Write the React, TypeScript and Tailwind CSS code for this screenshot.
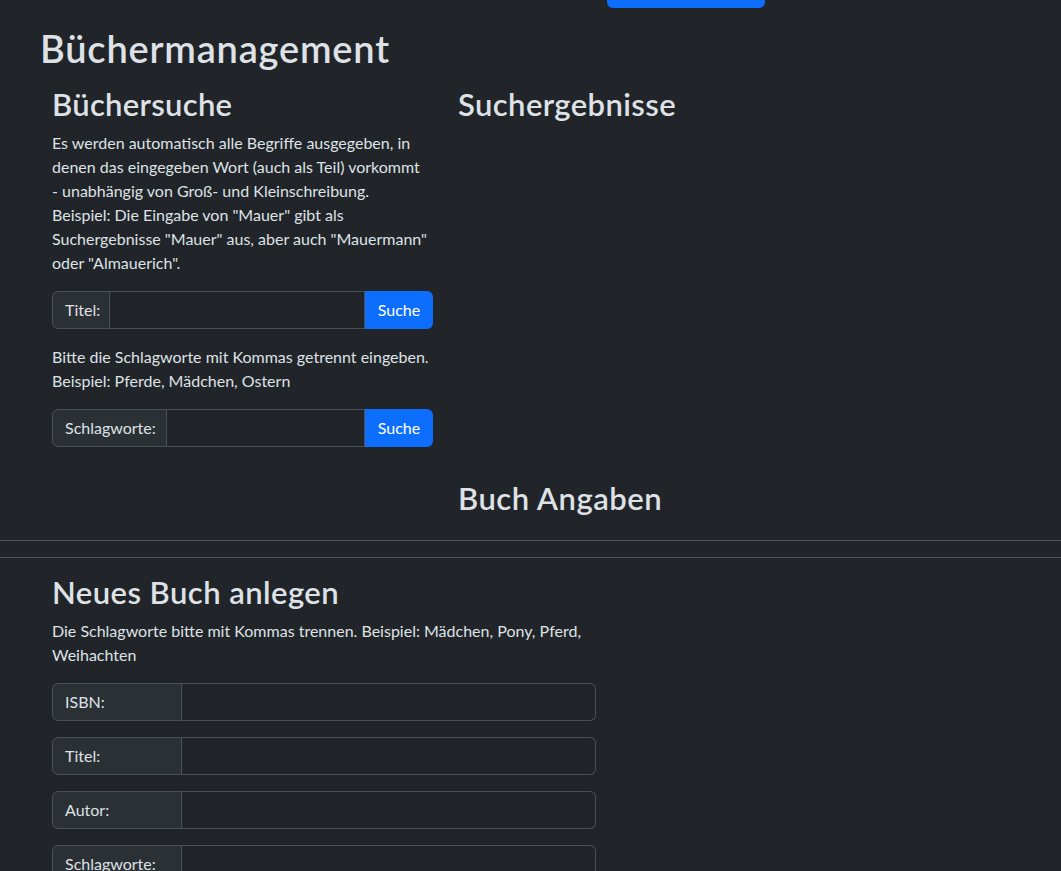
import React from "react";

const font = { fontFamily: "Lato, 'Noto Sans', sans-serif" };

function SearchGroup({ label, labelW }: { label: string; labelW: string }) {
  return (
    <div className="flex h-[38px] w-[381px]">
      <div
        className={`${labelW} flex items-center px-3 bg-[#2b3035] border border-[#495057] rounded-l-md text-[16px] whitespace-nowrap`}
      >
        {label}
      </div>
      <input
        className="flex-1 min-w-0 bg-[#212529] border-y border-r border-[#495057] outline-none px-3 text-[#dee2e6]"
        type="text"
      />
      <button className="w-[68px] bg-[#0d6efd] text-white rounded-r-md text-[16px]">Suche</button>
    </div>
  );
}

function FormGroup({ label }: { label: string }) {
  return (
    <div className="flex h-[38px] w-[544px]">
      <div className="w-[130px] flex items-center px-3 bg-[#2b3035] border border-[#495057] rounded-l-md text-[16px] whitespace-nowrap">
        {label}
      </div>
      <input
        className="flex-1 min-w-0 bg-[#212529] border-y border-r border-[#495057] rounded-r-md outline-none px-3 text-[#dee2e6]"
        type="text"
      />
    </div>
  );
}

export default function App() {
  return (
    <div className="min-h-screen bg-[#212529] text-[#dee2e6] overflow-hidden" style={font}>
      <div className="ml-[607px] w-[158px] h-2 bg-[#0d6efd] rounded-b-md" />
      <h1 className="mt-[17px] ml-10 text-[38px] leading-[46px] font-semibold tracking-[0.8px]">Büchermanagement</h1>
      <div className="flex gap-[25px] ml-[52px] mt-[15px]">
        <div className="w-[381px]">
          <h2 className="text-[31px] leading-[37px] font-semibold tracking-[0.3px] mb-2">Büchersuche</h2>
          <p className="text-[16px] leading-6 whitespace-nowrap mb-4">
            Es werden automatisch alle Begriffe ausgegeben, in
            <br />
            denen das eingegeben Wort (auch als Teil) vorkommt
            <br />
            - unabhängig von Groß- und Kleinschreibung.
            <br />
            Beispiel: Die Eingabe von "Mauer" gibt als
            <br />
            Suchergebnisse "Mauer" aus, aber auch "Mauermann"
            <br />
            oder "Almauerich".
          </p>
          <SearchGroup label="Titel:" labelW="w-[58px]" />
          <p className="text-[16px] leading-6 whitespace-nowrap mt-4 mb-4">
            Bitte die Schlagworte mit Kommas getrennt eingeben.
            <br />
            Beispiel: Pferde, Mädchen, Ostern
          </p>
          <SearchGroup label="Schlagworte:" labelW="w-[115px]" />
        </div>
        <div>
          <h2 className="text-[31px] leading-[37px] font-semibold tracking-[0.4px] mb-2">Suchergebnisse</h2>
        </div>
      </div>
      <div className="ml-[458px] mt-[33px]">
        <h2 className="text-[31px] leading-[37px] font-semibold tracking-[0.5px]">Buch Angaben</h2>
      </div>
      <div className="mt-[23px] border-t border-[#505458]" />
      <div className="mt-4 border-t border-[#505458]" />
      <div className="ml-[52px] mt-[16px]">
        <h2 className="text-[31px] leading-[37px] font-semibold tracking-[0.45px] mb-2">Neues Buch anlegen</h2>
        <p className="text-[16px] leading-6 whitespace-nowrap mb-4">
          Die Schlagworte bitte mit Kommas trennen. Beispiel: Mädchen, Pony, Pferd,
          <br />
          Weihachten
        </p>
        <div className="flex flex-col gap-4">
          <FormGroup label="ISBN:" />
          <FormGroup label="Titel:" />
          <FormGroup label="Autor:" />
          <FormGroup label="Schlagworte:" />
        </div>
      </div>
    </div>
  );
}
